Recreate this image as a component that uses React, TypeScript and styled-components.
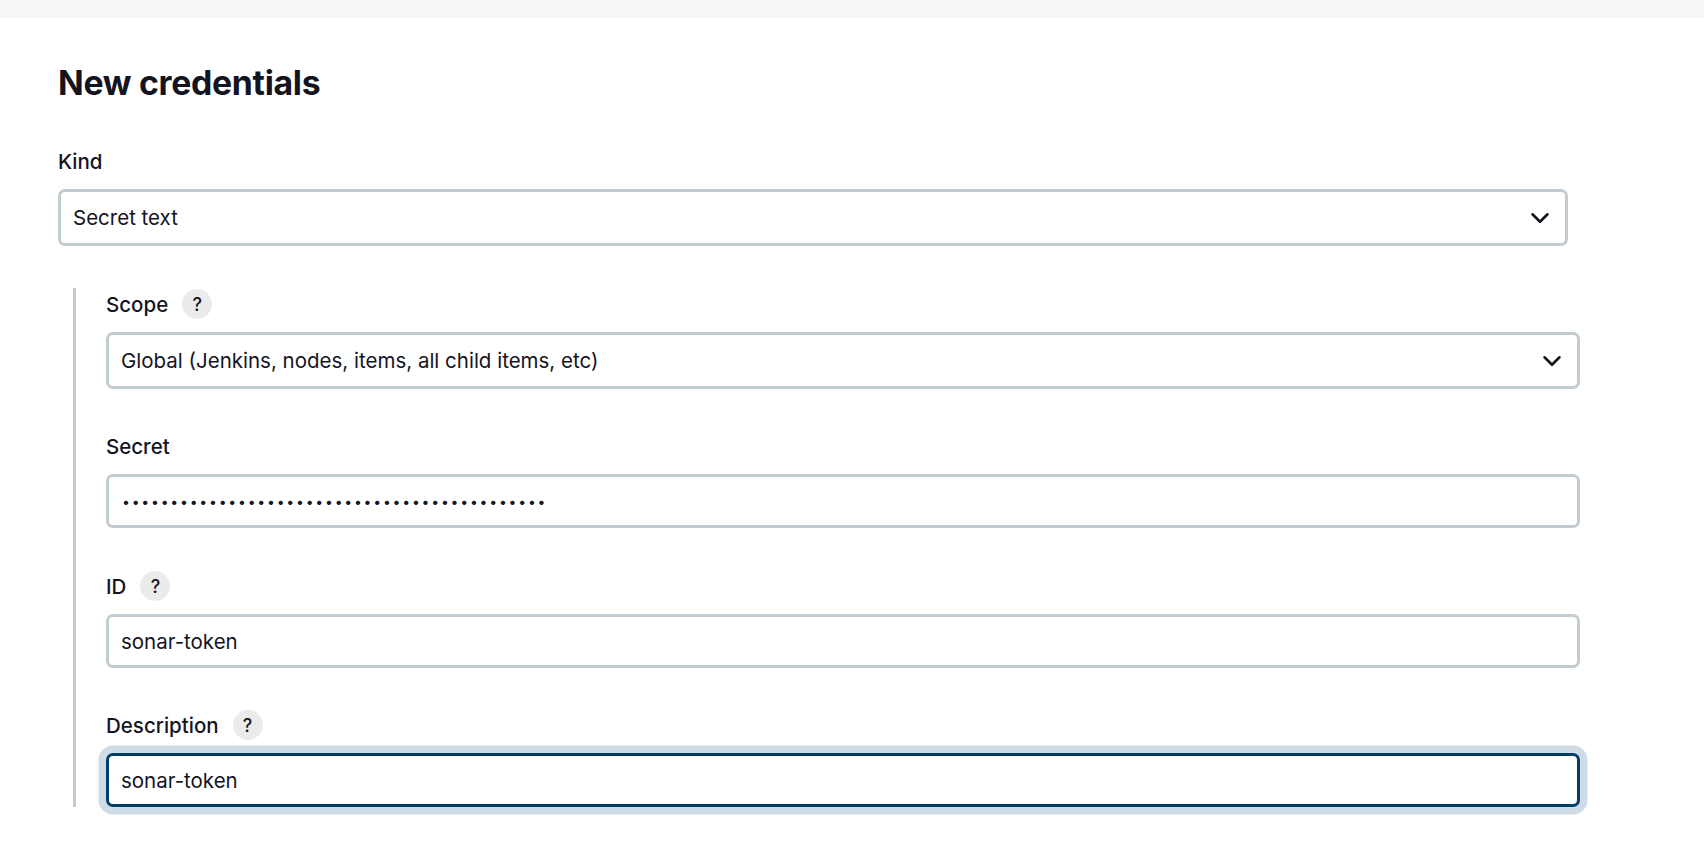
import React from 'react'
import styled, { createGlobalStyle } from 'styled-components'
import { ChevronDown } from 'lucide-react'

const GlobalStyle = createGlobalStyle`
  html, body {
    margin: 0;
    padding: 0;
    background: #fff;
    font-family: Inter, 'Liberation Sans', sans-serif;
    color: #14141f;
  }
`

const TopBar = styled.div`
  height: 18px;
  background-color: #f6f6f8;
`

const Main = styled.main`
  padding: 40px 0 41px 58px;
  width: 1510px;
`

const Title = styled.h1`
  margin: 0 0 38px;
  font-size: 33.8px;
  line-height: 50px;
  font-weight: 700;
  letter-spacing: -0.3px;
  color: #14141f;
`

const Field = styled.div<{ $gap: number }>`
  margin-bottom: ${(props) => props.$gap}px;
`

const LabelRow = styled.div`
  display: flex;
  align-items: center;
  gap: 14px;
  height: 30px;
  margin-bottom: 13px;
  font-size: 20.5px;
  font-weight: 500;
`

const HelpButton = styled.span`
  width: 30px;
  height: 30px;
  border-radius: 50%;
  display: flex;
  align-items: center;
  justify-content: center;
  background-color: #ebebeb;
  font-size: 18px;
  font-weight: 500;
`

const Box = styled.div<{ $height: number; $focused?: boolean }>`
  box-sizing: border-box;
  height: ${(props) => props.$height}px;
  display: flex;
  align-items: center;
  justify-content: space-between;
  padding: 0 10px 0 12px;
  background: #fff;
  border: 3px solid ${(props) => (props.$focused ? '#023f66' : '#c3ccd1')};
  border-radius: 7px;
  box-shadow: ${(props) => (props.$focused ? '0 0 0 7.5px #cfdce8' : 'none')};
  font-size: 20.5px;
`

const Dots = styled.span`
  margin-left: 1px;
  font-size: 14px;
  letter-spacing: 1.79px;
`

const Nested = styled.section`
  margin: 0 -12px 0 15px;
  padding: 1px 0 0 30px;
  border-left: 3px solid #c3ccd1;
`

const App = () => (
  <>
    <GlobalStyle />
    <TopBar />
    <Main>
      <Title>New credentials</Title>
      <Field $gap={42}>
        <LabelRow>Kind</LabelRow>
        <Box $height={57}>
          Secret text
          <ChevronDown size={30} strokeWidth={2} />
        </Box>
      </Field>
      <Nested>
        <Field $gap={42}>
          <LabelRow>
            Scope
            <HelpButton>?</HelpButton>
          </LabelRow>
          <Box $height={57}>
            {'Global (Jenkins, nodes, items, all child items, etc)'}
            <ChevronDown size={30} strokeWidth={2} />
          </Box>
        </Field>
        <Field $gap={43}>
          <LabelRow>Secret</LabelRow>
          <Box $height={54}>
            <Dots>{'•'.repeat(44)}</Dots>
          </Box>
        </Field>
        <Field $gap={42}>
          <LabelRow>
            ID
            <HelpButton>?</HelpButton>
          </LabelRow>
          <Box $height={54}>sonar-token</Box>
        </Field>
        <Field $gap={0}>
          <LabelRow>
            Description
            <HelpButton>?</HelpButton>
          </LabelRow>
          <Box $height={54} $focused>
            sonar-token
          </Box>
        </Field>
      </Nested>
    </Main>
  </>
)

export default App
